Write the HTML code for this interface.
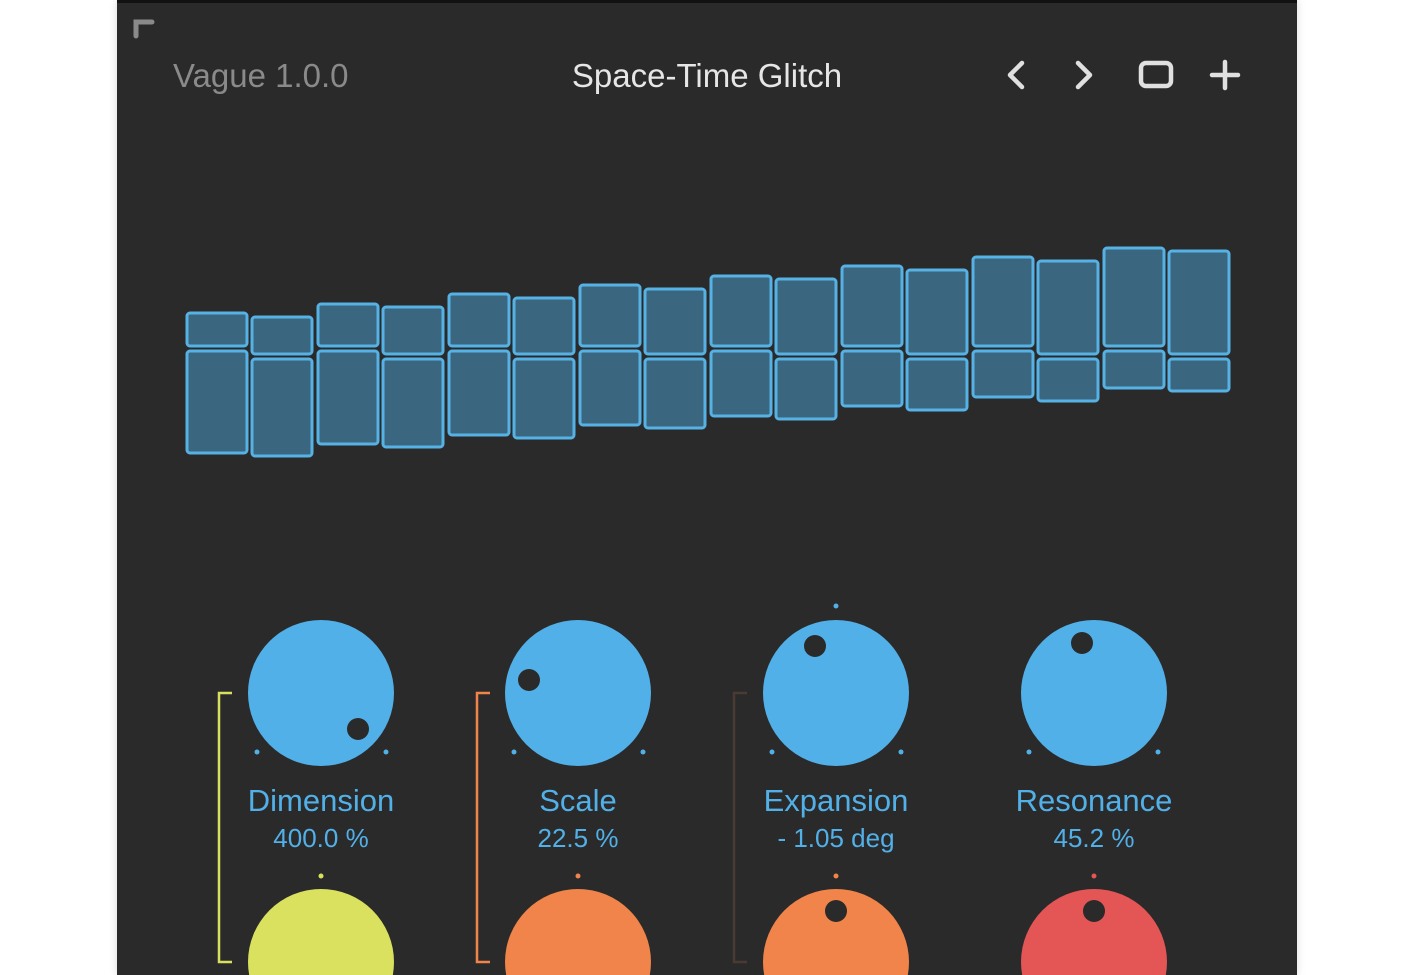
<!DOCTYPE html>
<html><head><meta charset="utf-8"><style>
html,body{margin:0;width:1415px;height:975px;background:#fff;overflow:hidden;position:relative;font-family:"Liberation Sans",sans-serif}
#p{position:absolute;left:117px;top:0;width:1180px;height:975px;box-sizing:border-box;background:#2a2a2a;border-top:3px solid #111;box-shadow:0 0 8px rgba(0,0,0,.15)}
.t{position:absolute;white-space:nowrap}
</style></head><body>
<div id="p"></div>
<svg width="1415" height="975" style="position:absolute;left:0;top:0">
<path d="M136 36V22H152" fill="none" stroke="#8a8a8a" stroke-width="5" stroke-linecap="round"/>
<g fill="none" stroke="#e0e0e0" stroke-width="4.5" stroke-linecap="round" stroke-linejoin="round">
<path d="M1022 63L1010 75L1022 87"/><path d="M1078 63L1090 75L1078 87"/>
<rect x="1141" y="63" width="30" height="23" rx="5"/>
<path d="M1225 62V88M1212 75H1238"/>
</g>
<g fill="#3a6680" stroke="#56b2e4" stroke-width="3">
<rect x="187" y="313" width="60" height="33" rx="3"/><rect x="187" y="351" width="60" height="102" rx="3"/>
<rect x="252" y="317" width="60" height="37" rx="3"/><rect x="252" y="359" width="60" height="97" rx="3"/>
<rect x="318" y="304" width="60" height="42" rx="3"/><rect x="318" y="351" width="60" height="93" rx="3"/>
<rect x="383" y="307" width="60" height="47" rx="3"/><rect x="383" y="359" width="60" height="88" rx="3"/>
<rect x="449" y="294" width="60" height="52" rx="3"/><rect x="449" y="351" width="60" height="84" rx="3"/>
<rect x="514" y="298" width="60" height="56" rx="3"/><rect x="514" y="359" width="60" height="79" rx="3"/>
<rect x="580" y="285" width="60" height="61" rx="3"/><rect x="580" y="351" width="60" height="74" rx="3"/>
<rect x="645" y="289" width="60" height="65" rx="3"/><rect x="645" y="359" width="60" height="69" rx="3"/>
<rect x="711" y="276" width="60" height="70" rx="3"/><rect x="711" y="351" width="60" height="65" rx="3"/>
<rect x="776" y="279" width="60" height="75" rx="3"/><rect x="776" y="359" width="60" height="60" rx="3"/>
<rect x="842" y="266" width="60" height="80" rx="3"/><rect x="842" y="351" width="60" height="55" rx="3"/>
<rect x="907" y="270" width="60" height="84" rx="3"/><rect x="907" y="359" width="60" height="51" rx="3"/>
<rect x="973" y="257" width="60" height="89" rx="3"/><rect x="973" y="351" width="60" height="46" rx="3"/>
<rect x="1038" y="261" width="60" height="93" rx="3"/><rect x="1038" y="359" width="60" height="42" rx="3"/>
<rect x="1104" y="248" width="60" height="98" rx="3"/><rect x="1104" y="351" width="60" height="37" rx="3"/>
<rect x="1169" y="251" width="60" height="103" rx="3"/><rect x="1169" y="359" width="60" height="32" rx="3"/>
</g>
<g fill="none" stroke-width="2.5">
<path d="M232 693H219V962H232" stroke="#d8e060"/>
<path d="M490 693H477V962H490" stroke="#f0844a"/>
<path d="M747 693H734V962H747" stroke="#4a3a34"/>
</g>
<g fill="#52b0e8">
<circle cx="321" cy="693" r="73"/><circle cx="578" cy="693" r="73"/><circle cx="836" cy="693" r="73"/><circle cx="1094" cy="693" r="73"/>
<circle cx="257" cy="752" r="2.5"/><circle cx="386" cy="752" r="2.5"/>
<circle cx="514" cy="752" r="2.5"/><circle cx="643" cy="752" r="2.5"/>
<circle cx="772" cy="752" r="2.5"/><circle cx="901" cy="752" r="2.5"/>
<circle cx="1029" cy="752" r="2.5"/><circle cx="1158" cy="752" r="2.5"/>
<circle cx="836" cy="606" r="2.5"/>
</g>
<circle cx="321" cy="962" r="73" fill="#d9e15e"/><circle cx="321" cy="876" r="2.5" fill="#d9e15e"/>
<circle cx="578" cy="962" r="73" fill="#f0844a"/><circle cx="578" cy="876" r="2.5" fill="#f0844a"/>
<circle cx="836" cy="962" r="73" fill="#f0844a"/><circle cx="836" cy="876" r="2.5" fill="#f0844a"/>
<circle cx="1094" cy="962" r="73" fill="#e45555"/><circle cx="1094" cy="876" r="2.5" fill="#e45555"/>
<g fill="#2a2a2a">
<circle cx="358" cy="729" r="11"/><circle cx="529" cy="680" r="11"/><circle cx="815" cy="646" r="11"/><circle cx="1082" cy="643" r="11"/>
<circle cx="836" cy="911" r="11"/><circle cx="1094" cy="911" r="11"/>
</g>
</svg>
<div class="t" style="left:173px;top:57px;font-size:33px;color:#8a8a8a">Vague 1.0.0</div>
<div class="t" style="left:557px;top:57px;width:300px;text-align:center;font-size:33px;color:#e6e6e6">Space-Time Glitch</div>
<div class="t" style="left:221px;top:783px;width:200px;text-align:center;font-size:31px;color:#52b0e8">Dimension</div>
<div class="t" style="left:221px;top:823px;width:200px;text-align:center;font-size:26px;color:#52b0e8">400.0 %</div>
<div class="t" style="left:478px;top:783px;width:200px;text-align:center;font-size:31px;color:#52b0e8">Scale</div>
<div class="t" style="left:478px;top:823px;width:200px;text-align:center;font-size:26px;color:#52b0e8">22.5 %</div>
<div class="t" style="left:736px;top:783px;width:200px;text-align:center;font-size:31px;color:#52b0e8">Expansion</div>
<div class="t" style="left:736px;top:823px;width:200px;text-align:center;font-size:26px;color:#52b0e8">- 1.05 deg</div>
<div class="t" style="left:994px;top:783px;width:200px;text-align:center;font-size:31px;color:#52b0e8">Resonance</div>
<div class="t" style="left:994px;top:823px;width:200px;text-align:center;font-size:26px;color:#52b0e8">45.2 %</div>
</body></html>
